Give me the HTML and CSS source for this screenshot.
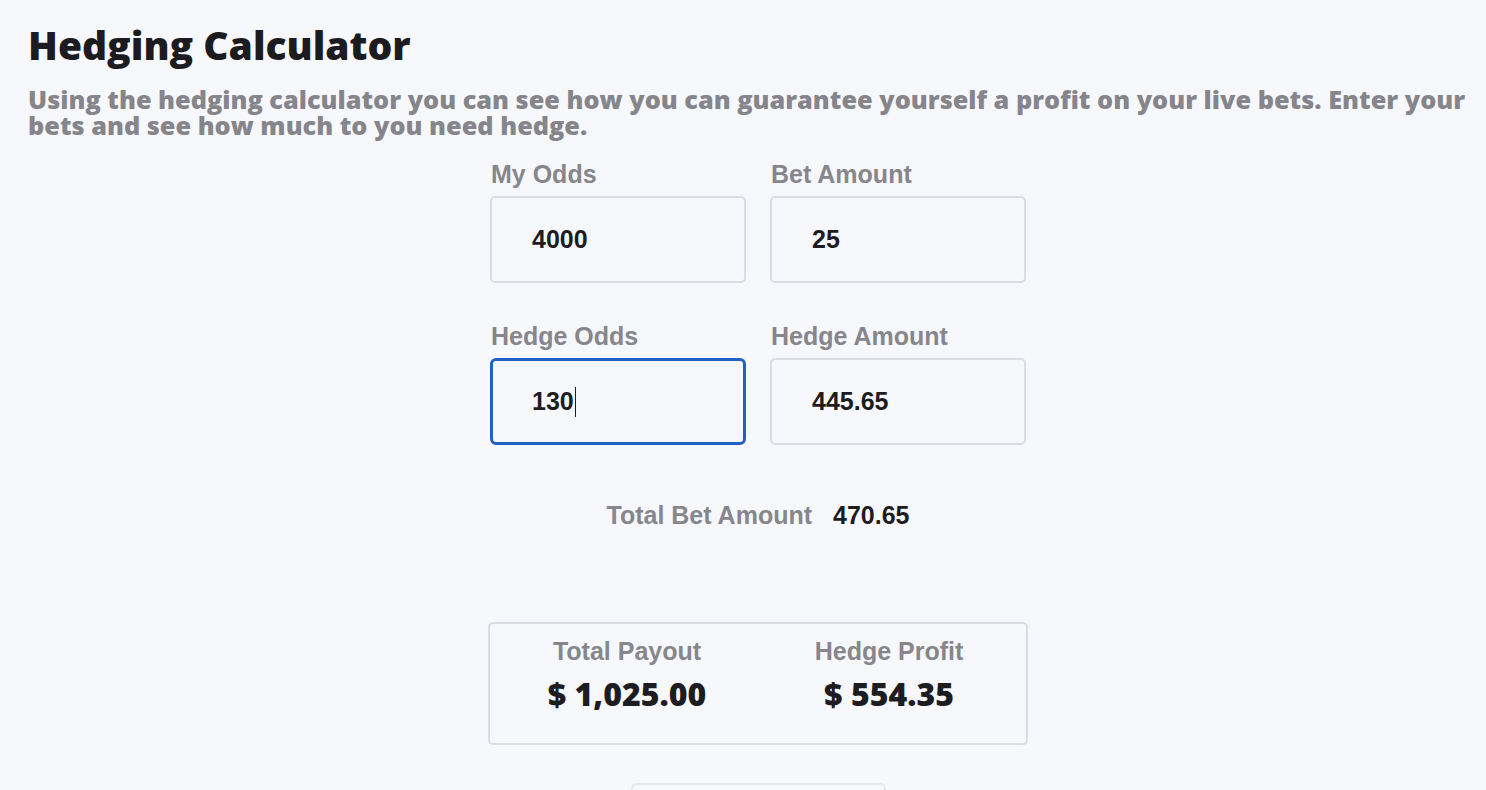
FILE: index.html
```html
<!DOCTYPE html>
<html>
<head>
<meta charset="utf-8">
<link rel="stylesheet" href="styles.css">
</head>
<body>
<main class="page">
  <h1 class="title">Hedging Calculator</h1>
  <p class="subtitle">Using the hedging calculator you can see how you can guarantee yourself a profit on your live bets. Enter your bets and see how much to you need hedge.</p>

  <div class="form">
    <div class="field">
      <label class="label">My Odds</label>
      <div class="input">4000</div>
    </div>
    <div class="field">
      <label class="label">Bet Amount</label>
      <div class="input">25</div>
    </div>
    <div class="field">
      <label class="label">Hedge Odds</label>
      <div class="input focused">130<span class="caret"></span></div>
    </div>
    <div class="field">
      <label class="label">Hedge Amount</label>
      <div class="input">445.65</div>
    </div>
  </div>

  <div class="total">
    <span class="total-label">Total Bet Amount</span>
    <span class="total-value">470.65</span>
  </div>

  <div class="results">
    <div class="result">
      <div class="result-label">Total Payout</div>
      <div class="result-value">$ 1,025.00</div>
    </div>
    <div class="result">
      <div class="result-label">Hedge Profit</div>
      <div class="result-value">$ 554.35</div>
    </div>
  </div>

  <div class="reset-box"></div>
</main>
</body>
</html>
```
FILE: styles.css
```css
html, body {
  margin: 0;
  padding: 0;
  overflow: hidden;
  background: #f7f8fc;
}
.page {
  margin-left: 28px;
  width: 1460px;
  padding-top: 22px;
}
.title {
  margin: 0;
  font-family: "Open Sans", "Noto Sans", sans-serif;
  font-weight: 800;
  font-size: 39px;
  line-height: 46px;
  color: #1b1b20;
}
.subtitle {
  margin: 18px 0 0 0;
  font-family: "Open Sans", "Noto Sans", sans-serif;
  font-weight: 800;
  font-size: 25.3px;
  line-height: 26px;
  color: #85858b;
}
.form {
  width: 536px;
  margin: 22px auto 0 auto;
  display: grid;
  grid-template-columns: 256px 256px;
  column-gap: 24px;
  row-gap: 39px;
}
.field {
  display: flex;
  flex-direction: column;
}
.label, .total-label, .result-label {
  font-family: "Liberation Sans", Arial, sans-serif;
  font-weight: 700;
  font-size: 25px;
  line-height: 28px;
  color: #86868c;
}
.label {
  margin-bottom: 8px;
  padding-left: 1px;
}
.input {
  box-sizing: border-box;
  height: 87px;
  border: 2px solid #dcdce2;
  border-radius: 5px;
  padding-left: 40px;
  display: flex;
  align-items: center;
  font-family: "Liberation Sans", Arial, sans-serif;
  font-weight: 700;
  font-size: 25px;
  color: #1c1c21;
}
.input.focused {
  border: 3px solid #2261c4;
  border-radius: 6px;
  padding-left: 39px;
}
.caret {
  display: inline-block;
  width: 1.5px;
  height: 30px;
  background: #1c1c21;
  margin-left: 1px;
}
.total {
  display: flex;
  justify-content: center;
  align-items: center;
  gap: 21px;
  margin-top: 56px;
}
.total-value {
  font-family: "Liberation Sans", Arial, sans-serif;
  font-weight: 700;
  font-size: 25px;
  line-height: 28px;
  color: #1c1c21;
}
.results {
  box-sizing: border-box;
  width: 540px;
  height: 123px;
  margin: 93px auto 0 auto;
  border: 2px solid #dcdce2;
  border-radius: 5px;
  display: grid;
  grid-template-columns: 1fr 1fr;
  padding: 13px 6px 0 6px;
}
.result {
  display: flex;
  flex-direction: column;
  align-items: center;
}
.result-value {
  margin-top: 11px;
  font-family: "Open Sans", "Noto Sans", sans-serif;
  font-weight: 800;
  font-size: 32px;
  line-height: 36px;
  color: #1c1c21;
}
.reset-box {
  box-sizing: border-box;
  width: 255px;
  height: 60px;
  margin: 38px auto 0 auto;
  border: 2px solid #e6e6ec;
  border-radius: 6px;
}
```
